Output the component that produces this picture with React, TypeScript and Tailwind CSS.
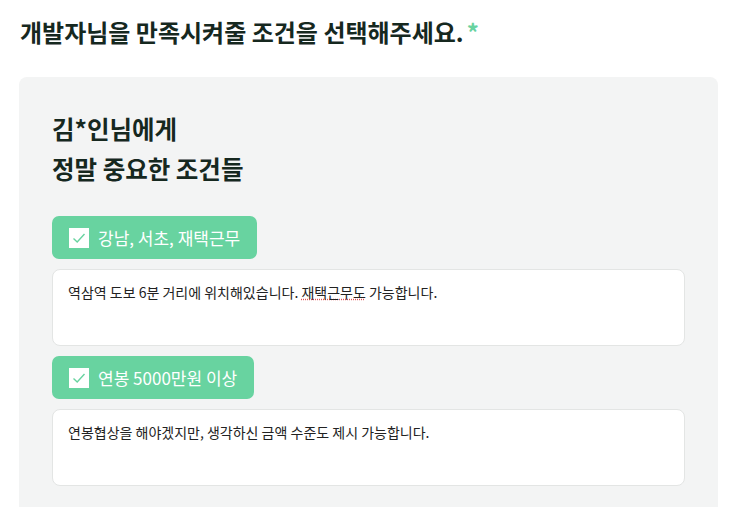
import React from "react";

function Check() {
  return (
    <span className="flex h-5 w-5 items-center justify-center bg-white">
      <svg width="14" height="14" viewBox="0 0 14 14" fill="none">
        <path d="M1.5 7.5 L5.2 11 L12.5 3" stroke="#68d3a0" strokeWidth="1.4" fill="none" />
      </svg>
    </span>
  );
}

function Item({ label, text }: { label: string; text: React.ReactNode }) {
  return (
    <div className="flex flex-col gap-[10px]">
      <div className="flex h-[43px] w-fit items-center gap-[9px] rounded-[7px] bg-[#68d3a0] pl-[17px] pr-[17px] text-[17px] text-white">
        <Check />
        <span>{label}</span>
      </div>
      <div className="h-[77px] rounded-[8px] border border-[#e3e5e4] bg-white px-[15px] pt-[12px] text-[14px] text-[#222]">
        {text}
      </div>
    </div>
  );
}

export default function App() {
  return (
    <div
      className="h-[507px] w-[737px] overflow-hidden bg-white"
      style={{ fontFamily: '"Noto Sans CJK KR", "Noto Sans", sans-serif' }}
    >
      <h1 className="pl-[20px] pt-[14px] text-[24px] font-bold leading-[36px] text-[#16281f]">
        개발자님을 만족시켜줄 조건을 선택해주세요.<span className="ml-[3px] text-[#68d3a0]">*</span>
      </h1>
      <div className="ml-[19px] mr-[19px] mt-[27px] rounded-[8px] bg-[#f3f4f4] px-[33px] pt-[32px] pb-[40px]">
        <div className="text-[24.5px] font-semibold leading-[40px] text-[#16281f]">
          <div>김*인님에게</div>
          <div>정말 중요한 조건들</div>
        </div>
        <div className="mt-[27px] flex flex-col gap-[10px]">
          <Item
            label="강남, 서초, 재택근무"
            text={
              <>
                역삼역 도보 6분 거리에 위치해있습니다.{" "}
                <span className="underline decoration-[#e05555] decoration-dotted">재택근무도</span> 가능합니다.
              </>
            }
          />
          <Item label="연봉 5000만원 이상" text="연봉협상을 해야겠지만, 생각하신 금액 수준도 제시 가능합니다." />
        </div>
      </div>
    </div>
  );
}
